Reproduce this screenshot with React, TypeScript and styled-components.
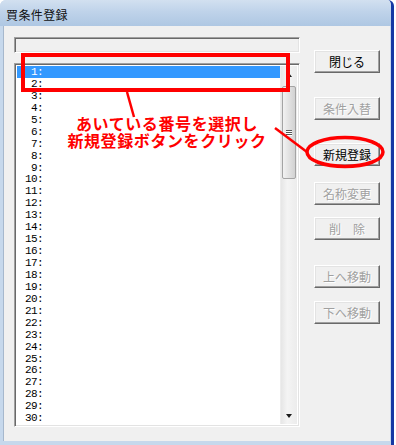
import React from 'react';
import styled, { createGlobalStyle } from 'styled-components';

const GlobalStyle = createGlobalStyle`
  html, body {
    margin: 0;
    padding: 0;
    background: #ffffff;
  }
  body {
    font-family: "Noto Sans CJK JP", "Liberation Sans", sans-serif;
  }
`;

const Stage = styled.div`
  position: relative;
  width: 396px;
  height: 445px;
  overflow: hidden;
`;

const Window = styled.div`
  width: 394px;
  height: 445px;
  box-sizing: border-box;
  display: flex;
  flex-direction: column;
  background: #c6d8ec;
  border-radius: 6px 6px 0 0;
  border-right: 3px solid #1538a4;
  overflow: hidden;
`;

const TitleBar = styled.div`
  height: 26px;
  flex-shrink: 0;
  display: flex;
  align-items: center;
  padding: 2px 0 0 6px;
  box-sizing: border-box;
  background: linear-gradient(#d2e0f0, #bfd3ea 45%, #aec7e3);
  font-size: 12px;
  color: #111;
  letter-spacing: 0.4px;
`;

const Client = styled.div`
  flex: 1;
  display: flex;
  margin: 0 1px 4px 3px;
  padding: 11px 0 0 10px;
  border-left: 1px solid #a6b8cd;
  background: #f0f0f0;
`;

const LeftCol = styled.div`
  width: 286px;
  display: flex;
  flex-direction: column;
`;

const Sunken = styled.div`
  box-sizing: border-box;
  border-top: 1px solid #a0a0a0;
  border-left: 1px solid #a0a0a0;
  border-bottom: 1px solid #ffffff;
  border-right: 1px solid #ffffff;
  box-shadow: inset 1px 1px #696969, inset -1px -1px #e3e3e3;
`;

const TextField = styled(Sunken)`
  height: 16px;
  background: #f0f0f0;
`;

const ListBox = styled(Sunken)`
  margin-top: 10px;
  height: 364px;
  padding: 2px;
  background: #ffffff;
  display: flex;
`;

const Rows = styled.div`
  flex: 1;
  display: flex;
  flex-direction: column;
`;

const Row = styled.div<{ $selected?: boolean }>`
  height: 12px;
  line-height: 12px;
  padding-left: 8px;
  font-family: "Liberation Mono", "DejaVu Sans Mono", monospace;
  font-size: 11px;
  letter-spacing: -0.6px;
  color: ${p => (p.$selected ? '#ffffff' : '#000000')};
  background: ${p => (p.$selected ? '#3399ff' : 'transparent')};
  white-space: pre;
  overflow: hidden;
`;

const Num = styled.span`
  display: inline-block;
  width: 12px;
  text-align: right;
`;

const ScrollBar = styled.div`
  width: 16px;
  display: flex;
  flex-direction: column;
  background: linear-gradient(90deg, #e6e6e6, #f4f4f4 40%, #ececec);
  border-left: 1px solid #ededed;
`;

const ArrowBox = styled.div`
  height: 17px;
  flex-shrink: 0;
  display: flex;
  align-items: center;
  justify-content: center;
`;

const Triangle = styled.div<{ $down?: boolean }>`
  width: 0;
  height: 0;
  border-left: 3px solid transparent;
  border-right: 3px solid transparent;
  ${p =>
    p.$down
      ? 'border-top: 4px solid #1a1a1a;'
      : 'border-bottom: 4px solid #1a1a1a;'}
`;

const Track = styled.div`
  flex: 1;
  padding: 3px 1px 0 1px;
`;

const Thumb = styled.div`
  height: 93px;
  box-sizing: border-box;
  border: 1px solid #a4a4a4;
  border-radius: 2px;
  background: linear-gradient(90deg, #f2f2f2, #e2e2e2 50%, #d2d2d2);
  display: flex;
  flex-direction: column;
  align-items: center;
  justify-content: center;
  gap: 1px;
`;

const Grip = styled.div`
  width: 6px;
  height: 1px;
  background: #555;
  box-shadow: 0 1px #fff;
`;

const RightCol = styled.div`
  margin-left: 14px;
  display: flex;
  flex-direction: column;
`;

const Button = styled.div<{ $top: number; $disabled?: boolean }>`
  margin-top: ${p => p.$top}px;
  width: 66px;
  height: 23px;
  box-sizing: border-box;
  display: flex;
  align-items: center;
  justify-content: center;
  background: #f0f0f0;
  border-top: 1px solid #ffffff;
  border-left: 1px solid #ffffff;
  border-bottom: 1px solid #696969;
  border-right: 1px solid #696969;
  box-shadow: inset -1px -1px #a0a0a0, inset 1px 1px #e3e3e3;
  font-size: 12px;
  color: ${p => (p.$disabled ? '#a0a0a0' : '#000000')};
  text-shadow: ${p => (p.$disabled ? '1px 1px #ffffff' : 'none')};
  white-space: pre;
`;

const Overlay = styled.svg`
  position: absolute;
  left: 0;
  top: 0;
  pointer-events: none;
`;

const Callout = styled.div`
  position: absolute;
  left: 0;
  top: 115px;
  width: 334px;
  text-align: center;
  font-size: 16px;
  line-height: 17px;
  font-weight: 700;
  letter-spacing: 0.6px;
  color: #ff0000;
  pointer-events: none;
`;

const buttons = [
  { label: '閉じる', top: 13 },
  { label: '条件入替', top: 24, disabled: true },
  { label: '新規登録', top: 23 },
  { label: '名称変更', top: 16, disabled: true },
  { label: '削　除', top: 12, disabled: true },
  { label: '上へ移動', top: 25, disabled: true },
  { label: '下へ移動', top: 13, disabled: true },
];

const App: React.FC = () => {
  const rows = Array.from({ length: 30 }, (_, i) => i + 1);

  return (
    <Stage>
      <GlobalStyle />
      <Window>
        <TitleBar>買条件登録</TitleBar>
        <Client>
          <LeftCol>
            <TextField />
            <ListBox>
              <Rows>
                {rows.map(n => (
                  <Row key={n} $selected={n === 1}>
                    <Num>{n}</Num>:
                  </Row>
                ))}
              </Rows>
              <ScrollBar>
                <ArrowBox>
                  <Triangle />
                </ArrowBox>
                <Track>
                  <Thumb>
                    <Grip />
                    <Grip />
                    <Grip />
                  </Thumb>
                </Track>
                <ArrowBox>
                  <Triangle $down />
                </ArrowBox>
              </ScrollBar>
            </ListBox>
          </LeftCol>
          <RightCol>
            {buttons.map(b => (
              <Button key={b.label} $top={b.top} $disabled={b.disabled}>
                {b.label}
              </Button>
            ))}
          </RightCol>
        </Client>
      </Window>

      {/* red annotation drawn over the dialog */}
      <Overlay width={396} height={445} viewBox="0 0 396 445">
        <rect x={23} y={55} width={265} height={35} fill="none" stroke="#ff0000" strokeWidth={4} />
        <line x1={127} y1={92} x2={134} y2={117} stroke="#ff0000" strokeWidth={2.5} />
        <line x1={275} y1={128} x2={307} y2={152} stroke="#ff0000" strokeWidth={2.5} />
        <ellipse cx={345} cy={152} rx={38} ry={14.5} fill="none" stroke="#ff0000" strokeWidth={3.5} />
      </Overlay>
      <Callout>
        あいている番号を選択し
        <br />
        新規登録ボタンをクリック
      </Callout>
    </Stage>
  );
};

export default App;
